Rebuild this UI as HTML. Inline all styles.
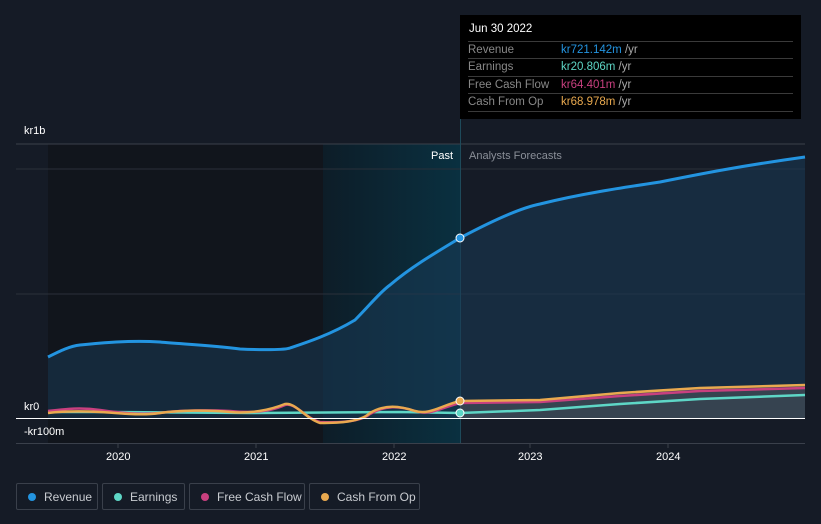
<!DOCTYPE html><html><head><style>
body{margin:0;width:821px;height:524px;background:#151b26;font-family:"Liberation Sans",sans-serif;overflow:hidden;position:relative;color:#fff}
.t{position:absolute;font-size:11px}
.leg{position:absolute;top:483px;height:27px;border:1px solid #3a404b;border-radius:2px;box-sizing:border-box;font-size:12px;color:#c8cbd0;line-height:26px;padding-left:27px}
.leg i{position:absolute;left:11px;top:9px;width:8px;height:8px;border-radius:50%}
.tip{position:absolute;left:460px;top:15px;width:341px;height:104px;background:#000;font-size:11.5px}
.row{position:absolute;left:8px;width:325px;border-top:1px solid #3a3a3a;height:17px;line-height:17px;color:#888}
.row b{font-weight:normal;position:absolute;left:93px}
</style></head><body>
<svg width="821" height="524" style="position:absolute;left:0;top:0">
<defs><linearGradient id="g" x1="0" x2="1"><stop offset="0" stop-color="#0d1d28"/><stop offset="1" stop-color="#0a3040"/></linearGradient></defs>
<rect x="48" y="144" width="275" height="299" fill="#11151c"/>
<rect x="323" y="144" width="137" height="299" fill="url(#g)"/>
<line x1="16" y1="144" x2="805" y2="144" stroke="#3a404b"/>
<line x1="16" y1="169" x2="805" y2="169" stroke="#2a303a"/>
<line x1="16" y1="294" x2="805" y2="294" stroke="#2a303a"/>
<line x1="460.5" y1="15" x2="460.5" y2="443" stroke="#1e4a5a"/>
<path d="M48,357 C60,351 70,346 80,345 C100,343 130,340 160,342 C180,344 210,345 240,349 C260,350 285,350 290,348 C305,343 330,335 355,320 C370,305 380,292 390,285 C410,268 430,256 460,238 C490,222 520,208 540,204 C580,194 620,188 660,182 C700,174 740,166 805,157 L805,418 L48,418Z" fill="#1a3a55" fill-opacity="0.55"/>
<path d="M48,357 C60,351 70,346 80,345 C100,343 130,340 160,342 C180,344 210,345 240,349 C260,350 285,350 290,348 C305,343 330,335 355,320 C370,305 380,292 390,285 C410,268 430,256 460,238 C490,222 520,208 540,204 C580,194 620,188 660,182 C700,174 740,166 805,157" fill="none" stroke="#2394e0" stroke-width="3"/>
<path d="M460,401 L540,400 L620,393 L700,388 L805,385 L805,418 L460,418Z" fill="#555a60" fill-opacity="0.5"/>
<path d="M48,412 L100,412 L250,413 L400,412 L460,413 L540,410 L620,404 L700,399 L805,395" fill="none" stroke="#5ed6c6" stroke-width="2.5"/>
<path d="M48,411 C65,409 80,407 100,410 C120,413 140,415 160,413 C180,410 210,410 230,411 C250,413 270,412 285,405 C295,402 305,418 320,422 C340,423 360,422 370,414 C385,405 400,406 415,411 C430,416 440,408 460,403 L540,402 L620,396 L700,391 L805,388" fill="none" stroke="#c8407f" stroke-width="2.5"/>
<path d="M48,413 C65,411 80,411 100,412 C120,413 140,416 160,413 C180,410 210,410 230,412 C250,414 270,410 285,404 C295,402 305,418 320,423 C340,423 360,422 370,413 C385,404 400,406 415,411 C430,415 440,406 460,401 L540,400 L620,393 L700,388 L805,385" fill="none" stroke="#e9a94f" stroke-width="2.5"/>
<line x1="16" y1="418.5" x2="805" y2="418.5" stroke="#fff"/>
<line x1="16" y1="443.5" x2="805" y2="443.5" stroke="#3a404b"/>
<g stroke="#3a404b"><line x1="118" y1="443" x2="118" y2="448"/><line x1="256" y1="443" x2="256" y2="448"/><line x1="394" y1="443" x2="394" y2="448"/><line x1="530" y1="443" x2="530" y2="448"/><line x1="668" y1="443" x2="668" y2="448"/></g>
<circle cx="460" cy="238" r="4" fill="#2394e0" stroke="#fff"/>
<circle cx="460" cy="401" r="4" fill="#e9a94f" stroke="#fff"/>
<circle cx="460" cy="413" r="4" fill="#5ed6c6" stroke="#fff"/>
</svg>
<div class="t" style="left:24px;top:125px">kr1b</div>
<div class="t" style="left:24px;top:401px">kr0</div>
<div class="t" style="left:24px;top:426px">-kr100m</div>
<div class="t" style="left:431px;top:150px">Past</div>
<div class="t" style="left:469px;top:150px;color:#8a8f98">Analysts Forecasts</div>
<div class="t" style="left:106px;top:451px">2020</div>
<div class="t" style="left:244px;top:451px">2021</div>
<div class="t" style="left:382px;top:451px">2022</div>
<div class="t" style="left:518px;top:451px">2023</div>
<div class="t" style="left:656px;top:451px">2024</div>
<div class="tip">
<div style="position:absolute;left:9px;top:8px;color:#fff">Jun 30 2022</div>
<div class="row" style="top:26px">Revenue<b style="color:#2394e0">kr721.142m <span style="color:#aaa">/yr</span></b></div>
<div class="row" style="top:43px">Earnings<b style="color:#5ed6c6">kr20.806m <span style="color:#aaa">/yr</span></b></div>
<div class="row" style="top:61px">Free Cash Flow<b style="color:#c8407f">kr64.401m <span style="color:#aaa">/yr</span></b></div>
<div class="row" style="top:78px">Cash From Op<b style="color:#e9a94f">kr68.978m <span style="color:#aaa">/yr</span></b></div>
<div class="row" style="top:96px;height:0"></div>
</div>
<div class="leg" style="left:16px;width:82px"><i style="background:#2394e0"></i>Revenue</div>
<div class="leg" style="left:102px;width:83px"><i style="background:#5ed6c6"></i>Earnings</div>
<div class="leg" style="left:189px;width:116px"><i style="background:#c8407f"></i>Free Cash Flow</div>
<div class="leg" style="left:309px;width:111px"><i style="background:#e9a94f"></i>Cash From Op</div>
</body></html>
